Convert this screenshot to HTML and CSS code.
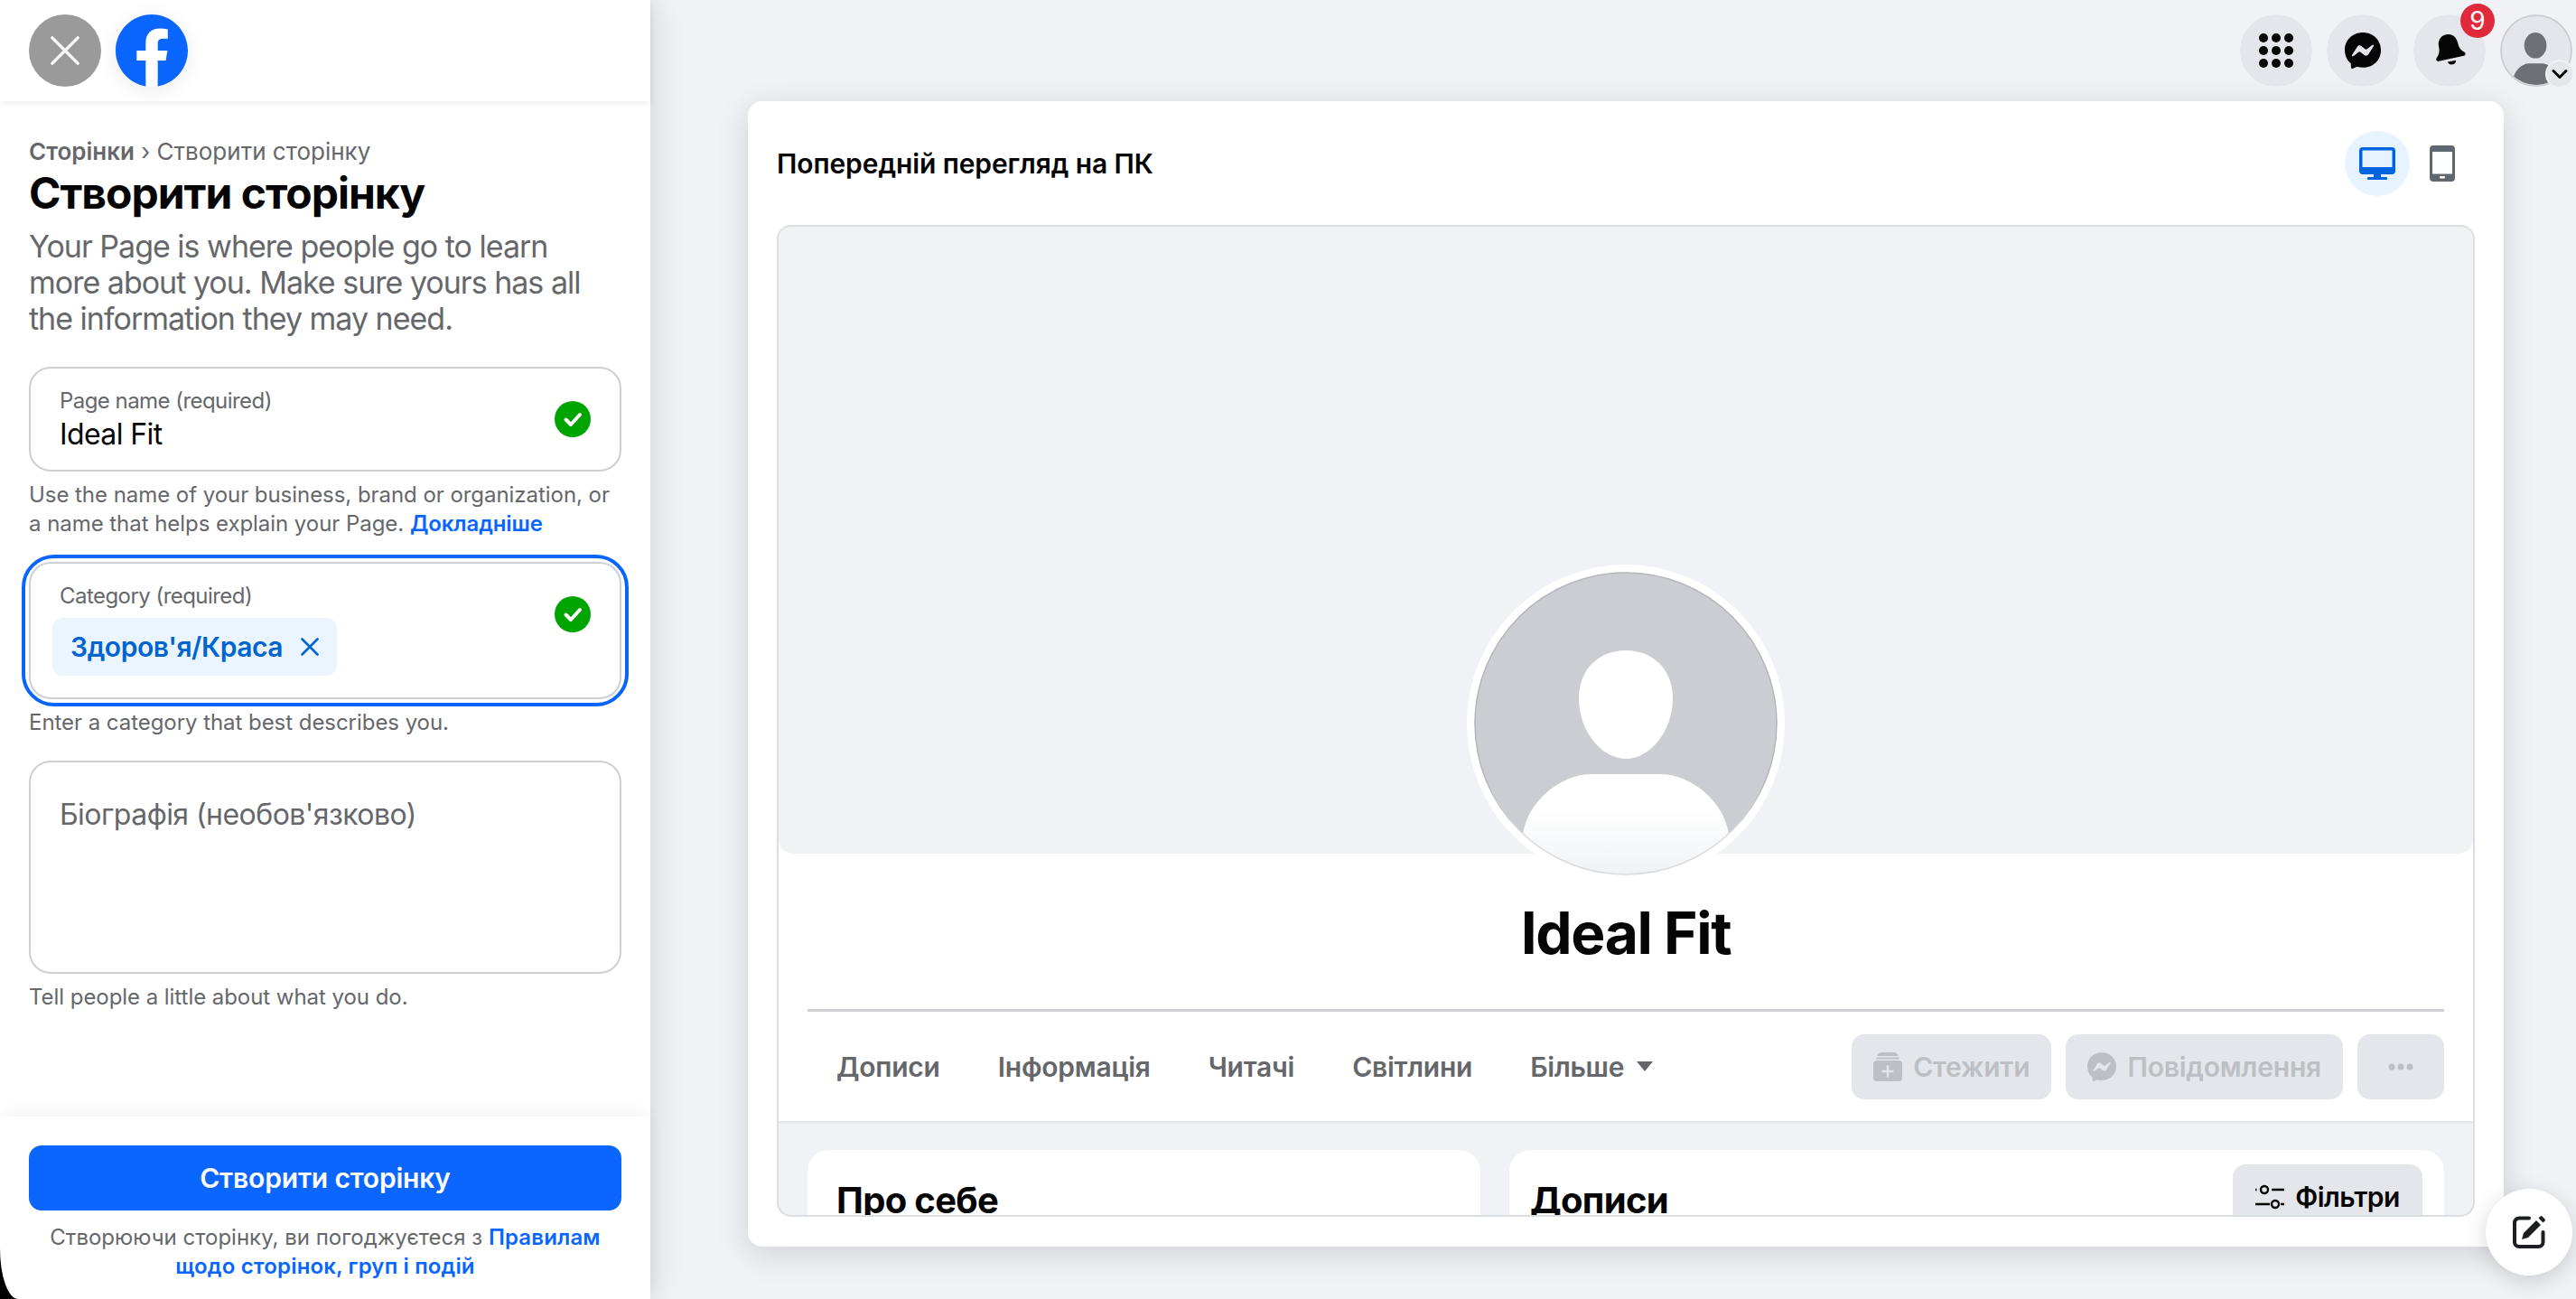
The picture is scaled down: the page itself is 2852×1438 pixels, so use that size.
FILE: index.html
```html
<!DOCTYPE html>
<html lang="uk">
<head>
  <meta charset="UTF-8">
  <title>Створити сторінку</title>
  <link rel="stylesheet" href="styles.css">
</head>
<body>
  <aside class="sidebar">
    <div class="side-head">
      <div class="close-btn">
        <svg viewBox="0 0 24 24" width="40" height="40"><path d="M3.5 3.5l17 17M20.5 3.5l-17 17" stroke="#fff" stroke-width="2" stroke-linecap="round" fill="none"/></svg>
      </div>
      <svg class="fb-logo" viewBox="0 0 36 36" width="80" height="80">
        <path fill="#0a66ff" d="M15 35.8C6.5 34.3 0 26.9 0 18 0 8.1 8.1 0 18 0s18 8.1 18 18c0 8.9-6.5 16.3-15 17.8l-1-.8h-4l-1 .8z"/>
        <path fill="#fff" d="M25 23l.8-5H21v-3.5c0-1.4.5-2.5 2.7-2.5H26V7.4c-1.3-.2-2.7-.4-4-.4-4.1 0-7 2.5-7 7v4h-4.5v5H15v12.7c1 .2 2 .3 3 .3s2-.1 3-.3V23h4z"/>
      </svg>
    </div>

    <div class="side-body">
      <div class="crumbs"><b>Сторінки</b> › Створити сторінку</div>
      <h1 class="side-title">Створити сторінку</h1>
      <p class="side-sub">Your Page is where people go to learn more about you. Make sure yours has all the information they may need.</p>

      <div class="field">
        <div class="field-label">Page name (required)</div>
        <div class="field-value">Ideal Fit</div>
        <svg class="ok" viewBox="0 0 40 40" width="40" height="40"><circle cx="20" cy="20" r="20" fill="#00a400"/><path d="M12.5 20.5l5.5 5.5 10-11" stroke="#fff" stroke-width="4" stroke-linecap="round" stroke-linejoin="round" fill="none"/></svg>
      </div>
      <p class="help">Use the name of your business, brand or organization, or a name that helps explain your Page. <a>Докладніше</a></p>

      <div class="focus-ring">
        <div class="field field-cat">
          <div class="field-label">Category (required)</div>
          <div class="chip">Здоров'я/Краса
            <svg viewBox="0 0 20 20" width="20" height="20"><path d="M1.5 1.5l17 17M18.5 1.5l-17 17" stroke="#0064d1" stroke-width="2.6" stroke-linecap="round" fill="none"/></svg>
          </div>
          <svg class="ok" viewBox="0 0 40 40" width="40" height="40"><circle cx="20" cy="20" r="20" fill="#00a400"/><path d="M12.5 20.5l5.5 5.5 10-11" stroke="#fff" stroke-width="4" stroke-linecap="round" stroke-linejoin="round" fill="none"/></svg>
        </div>
      </div>
      <p class="help help-cat">Enter a category that best describes you.</p>

      <div class="field field-bio">Біографія (необов'язково)</div>
      <p class="help help-bio">Tell people a little about what you do.</p>
    </div>

    <div class="side-foot">
      <div class="side-foot-inner">
        <div class="primary-btn">Створити сторінку</div>
        <p class="terms">Створюючи сторінку, ви погоджуєтеся з <a>Правилам щодо сторінок, груп і подій</a></p>
      </div>
    </div>
  </aside>

  <main class="main">
    <div class="topbar">
      <div class="round-btn">
        <svg viewBox="0 0 38 38" width="38" height="38" fill="#050505">
          <circle cx="5" cy="5" r="5"/><circle cx="19" cy="5" r="5"/><circle cx="33" cy="5" r="5"/>
          <circle cx="5" cy="19" r="5"/><circle cx="19" cy="19" r="5"/><circle cx="33" cy="19" r="5"/>
          <circle cx="5" cy="33" r="5"/><circle cx="19" cy="33" r="5"/><circle cx="33" cy="33" r="5"/>
        </svg>
      </div>
      <div class="round-btn">
        <svg viewBox="2 2 20 20" width="40" height="40">
          <path fill="#050505" d="M12 2C6.36 2 2 6.13 2 11.7c0 2.91 1.19 5.44 3.14 7.17.16.15.26.35.27.57l.05 1.78c.02.57.61.94 1.13.71l1.98-.87c.17-.08.36-.09.53-.04.91.25 1.88.38 2.9.38 5.64 0 10-4.13 10-9.7S17.64 2 12 2z"/>
          <path fill="#e4e6eb" d="M18 9.46l-2.94 4.66c-.47.74-1.47.93-2.17.4l-2.34-1.75a.6.6 0 0 0-.72 0l-3.16 2.4c-.42.32-.97-.18-.69-.63l2.94-4.66c.47-.74 1.47-.93 2.17-.4l2.34 1.75a.6.6 0 0 0 .72 0l3.16-2.4c.42-.32.97.18.69.63z"/>
        </svg>
      </div>
      <div class="round-btn">
        <svg viewBox="0 0 24 24" width="46" height="46">
          <g transform="rotate(-12 12 12)" fill="#050505">
            <path d="M12 2.5c-3.6 0-5.6 2.8-5.6 6 0 3-.9 4.5-2.5 6-.9.8-.5 2.2.7 2.2h14.8c1.2 0 1.6-1.4.7-2.2-1.6-1.5-2.5-3-2.5-6 0-3.2-2-6-5.600-6z"/>
            <path d="M9.500 18.200h5c-.3 1.300-1.300 2-2.500 2s-2.200-.7-2.500-2z"/>
          </g>
        </svg>
        <span class="badge">9</span>
      </div>
      <div class="round-btn avatar-btn">
        <svg viewBox="0 0 80 80" width="76" height="76">
          <ellipse cx="39" cy="34" rx="13" ry="15" fill="#6e7076"/>
          <path d="M12 80c0-14 9-25 20-25h14c11 0 20 11 20 25z" fill="#6e7076"/>
        </svg>
        <span class="chevron">
          <svg viewBox="0 0 20 20" width="20" height="20"><path d="M3 6.500l7 7 7-7" stroke="#050505" stroke-width="3" stroke-linecap="round" stroke-linejoin="round" fill="none"/></svg>
        </span>
      </div>
    </div>

    <section class="card">
      <div class="card-head">
        <div class="card-title">Попередній перегляд на ПК</div>
        <div class="view-toggle">
          <div class="view-btn view-on">
            <svg viewBox="0 0 40 36" width="40" height="36">
              <path fill="#0064e0" fill-rule="evenodd" d="M4 0h32a4 4 0 0 1 4 4v22a4 4 0 0 1-4 4H4a4 4 0 0 1-4-4V4a4 4 0 0 1 4-4zm-.500 3.500v18.500h33V3.500z"/>
              <rect x="16" y="29" width="8" height="4" fill="#0064e0"/>
              <rect x="9" y="33" width="22" height="3" rx="1.200" fill="#0064e0"/>
            </svg>
          </div>
          <div class="view-btn">
            <svg viewBox="0 0 28 40" width="28" height="40">
              <path fill="#606770" fill-rule="evenodd" d="M4 0h20a4 4 0 0 1 4 4v32a4 4 0 0 1-4 4H4a4 4 0 0 1-4-4V4a4 4 0 0 1 4-4zm-1 7v24.500h22V7z"/>
              <rect x="11" y="34" width="6" height="2.600" rx="1.300" fill="#fff"/>
            </svg>
          </div>
        </div>
      </div>

      <div class="preview">
        <div class="cover-wrap">
          <div class="cover">
            <div class="page-pic">
              <svg viewBox="0 0 336 336" width="336" height="336">
                <defs>
                  <linearGradient id="bodyfade" x1="0" y1="0" x2="0" y2="1">
                    <stop offset="0.35" stop-color="#fff"/>
                    <stop offset="1" stop-color="#f0f2f5"/>
                  </linearGradient>
                  <linearGradient id="rimfade" x1="0" y1="0" x2="0" y2="1">
                    <stop offset="0.7" stop-color="#b4b6bb"/>
                    <stop offset="0.85" stop-color="#d8dade"/>
                  </linearGradient>
                  <clipPath id="picclip"><circle cx="168" cy="168" r="167"/></clipPath>
                </defs>
                <circle cx="168" cy="168" r="167" fill="#cbcdd2"/>
                <path d="M168 87c-30 0-52 21-52 53 0 36 25 67 52 67s52-31 52-67c0-32-22-53-52-53z" fill="#fff"/>
                <path clip-path="url(#picclip)" d="M54 336V290c5-34 40-66 76-66h76c36 0 71 32 76 66v46z" fill="url(#bodyfade)"/>
                <circle cx="168" cy="168" r="167" fill="none" stroke="url(#rimfade)" stroke-width="1.500"/>
              </svg>
            </div>
          </div>
        </div>

        <div class="page-head">
          <div class="page-name">Ideal Fit</div>
          <div class="page-tabs">
            <div class="tab-list">
              <span class="tab">Дописи</span>
              <span class="tab">Інформація</span>
              <span class="tab">Читачі</span>
              <span class="tab">Світлини</span>
              <span class="tab">Більше <i class="caret"></i></span>
            </div>
            <div class="tab-actions">
              <div class="ghost-btn">
                <svg viewBox="0 0 32 32" width="32" height="32">
                  <path fill="#bcc0c4" d="M5 2.500C6 1 7.500 0 9.500 0h13c2 0 3.500 1 4.500 2.500l.6 1.500H4.400z"/>
                  <rect x="3.500" y="5.500" width="25" height="2" fill="#bcc0c4"/>
                  <path fill="#bcc0c4" fill-rule="evenodd" d="M4 9h24a4 4 0 0 1 4 4v15a4 4 0 0 1-4 4H4a4 4 0 0 1-4-4V13a4 4 0 0 1 4-4zm10.800 5.500v5.200H9.600v2.600h5.200v5.200h2.400v-5.200h5.200v-2.600h-5.200v-5.200z"/>
                </svg>
                Стежити
              </div>
              <div class="ghost-btn">
                <svg viewBox="2 2 20 20" width="32" height="32">
                  <path fill="#bcc0c4" d="M12 2C6.36 2 2 6.13 2 11.7c0 2.91 1.19 5.44 3.14 7.17.16.15.26.35.27.57l.05 1.78c.02.57.61.94 1.13.71l1.98-.87c.17-.08.36-.09.53-.04.91.25 1.88.38 2.9.38 5.64 0 10-4.13 10-9.7S17.64 2 12 2z"/>
                  <path fill="#e4e6eb" d="M18 9.46l-2.94 4.66c-.47.74-1.47.93-2.17.4l-2.34-1.75a.6.6 0 0 0-.72 0l-3.16 2.4c-.42.32-.97-.18-.69-.63l2.94-4.66c.47-.74 1.47-.93 2.17-.4l2.34 1.75a.6.6 0 0 0 .72 0l3.16-2.4c.42-.32.97.18.69.63z"/>
                </svg>
                Повідомлення
              </div>
              <div class="ghost-btn ghost-more">
                <svg viewBox="0 0 28 8" width="28" height="8" fill="#bcc0c4"><circle cx="4" cy="4" r="3.500"/><circle cx="14" cy="4" r="3.500"/><circle cx="24" cy="4" r="3.500"/></svg>
              </div>
            </div>
          </div>
        </div>

        <div class="page-body">
          <div class="panel panel-left"><h2>Про себе</h2></div>
          <div class="panel panel-right">
            <h2>Дописи</h2>
            <div class="filter-btn">
              <svg viewBox="0 0 32 32" width="32" height="32" fill="none" stroke="#050505" stroke-width="2.400">
                <circle cx="10" cy="8" r="4"/><path d="M0 8h1.500M18 8h14M0 24h16M28 24h4"/><circle cx="22" cy="24" r="4"/>
              </svg>
              Фільтри
            </div>
          </div>
        </div>
      </div>
    </section>

    <div class="compose">
      <svg viewBox="0 0 38 38" width="38" height="38">
        <path d="M19 3.500H8a5 5 0 0 0-5 5v21.500a5 5 0 0 0 5 5h21.500a5 5 0 0 0 5-5V19" fill="none" stroke="#1c1e21" stroke-width="4" stroke-linecap="round"/>
        <path d="M11 27l2-7L27 6l5 5-14 14z" fill="#1c1e21"/>
        <path d="M29.500 3.500l2-2a1.500 1.500 0 0 1 2 0l3 3a1.500 1.500 0 0 1 0 2l-2 2z" fill="#1c1e21"/>
      </svg>
    </div>
  </main>
</body>
</html>
```

FILE: styles.css
```css
* {
  box-sizing: border-box;
}
html, body {
  height: 100%;
}
body {
  margin: 0;
  display: flex;
  overflow: hidden;
  background: #f1f2f6;
  color: #050505;
  font-family: Inter, "Noto Sans", sans-serif;
}
h1, h2, p {
  margin: 0;
}
a {
  color: #0866ff;
  font-weight: 600;
}

/* left column */
.sidebar {
  width: 720px;
  flex: none;
  display: flex;
  flex-direction: column;
  background: #fff;
  box-shadow: 0 0 36px rgba(0, 0, 0, 0.14);
  position: relative;
  z-index: 2;
}
.side-head {
  height: 112px;
  flex: none;
  display: flex;
  gap: 16px;
  padding: 16px 32px;
  box-shadow: 0 2px 8px rgba(0, 0, 0, 0.08);
}
.close-btn {
  width: 80px;
  height: 80px;
  border-radius: 50%;
  background: #9a9a9a;
  display: flex;
  align-items: center;
  justify-content: center;
}
.fb-logo {
  filter: drop-shadow(0 4px 10px rgba(0, 0, 0, 0.08));
}
.side-body {
  flex: 1;
  padding: 40px 32px 0;
}
.crumbs {
  font-size: 26px;
  line-height: 32px;
  color: #65676b;
}
.crumbs b {
  font-weight: 600;
}
.side-title {
  font-size: 48px;
  line-height: 48px;
  font-weight: 700;
  letter-spacing: -1px;
  margin-top: 6px;
}
.side-sub {
  font-size: 34px;
  line-height: 40px;
  color: #65676b;
  letter-spacing: -1px;
  margin-top: 15px;
}
.field {
  position: relative;
  height: 116px;
  margin-top: 33px;
  padding: 20px 32px 0;
  border: 2px solid #ccd0d5;
  border-radius: 24px;
}
.field-label {
  font-size: 24px;
  line-height: 32px;
  color: #65676b;
  letter-spacing: -0.55px;
}
.field-value {
  font-size: 32px;
  line-height: 40px;
  margin-top: 1px;
  letter-spacing: -0.6px;
}
.ok {
  position: absolute;
  right: 32px;
  top: 36px;
}
.help {
  font-size: 24px;
  line-height: 32px;
  color: #65676b;
  margin-top: 10px;
  letter-spacing: -0.05px;
}
.help a {
  letter-spacing: -0.1px;
}
.focus-ring {
  margin: 18px -8px 0;
  padding: 4px;
  border: 4px solid #0866ff;
  border-radius: 36px;
  height: 168px;
}
.field-cat {
  height: 152px;
  margin-top: 0;
  padding-top: 20px;
}
.chip {
  display: inline-flex;
  align-items: center;
  gap: 20px;
  height: 64px;
  margin: 8px 0 0 -8px;
  padding: 0 20px;
  border-radius: 12px;
  background: #ebf5ff;
  color: #0064d1;
  font-size: 30px;
  font-weight: 600;
  letter-spacing: -0.45px;
}
.help-cat {
  margin-top: 2px;
}
.field-bio {
  height: 236px;
  margin-top: 26px;
  padding-top: 38px;
  font-size: 32px;
  line-height: 40px;
  color: #65676b;
  letter-spacing: -0.55px;
}
.help-bio {
  margin-top: 10px;
}
.side-foot {
  flex: none;
  height: 202px;
  background: #000;
  box-shadow: 0 -4px 16px rgba(0, 0, 0, 0.05);
}
.side-foot-inner {
  height: 100%;
  padding: 32px 32px 0;
  background: #fff;
  border-bottom-left-radius: 20px 56px;
}
.primary-btn {
  height: 72px;
  border-radius: 14px;
  background: #0a66ff;
  color: #fff;
  font-size: 30px;
  font-weight: 600;
  letter-spacing: -0.17px;
  display: flex;
  align-items: center;
  justify-content: center;
}
.terms {
  font-size: 24px;
  line-height: 32px;
  color: #65676b;
  text-align: center;
  margin-top: 14px;
}
.terms a {
  letter-spacing: 0.15px;
}

/* right column */
.main {
  flex: 1;
  min-width: 0;
  position: relative;
}
.topbar {
  height: 112px;
  display: flex;
  justify-content: flex-end;
  gap: 16px;
  padding: 16px 4px 0 0;
}
.round-btn {
  position: relative;
  width: 80px;
  height: 80px;
  border-radius: 50%;
  background: #e4e6eb;
  display: flex;
  align-items: center;
  justify-content: center;
}
.badge {
  position: absolute;
  top: -12px;
  right: -10px;
  width: 38px;
  height: 38px;
  border-radius: 50%;
  background: #e02a3c;
  color: #fff;
  font-size: 28px;
  line-height: 38px;
  text-align: center;
}
.avatar-btn {
  border: 2px solid #ccd0d5;
  overflow: visible;
}
.avatar-btn > svg {
  border-radius: 50%;
}
.chevron {
  position: absolute;
  right: -2px;
  bottom: -2px;
  width: 28px;
  height: 28px;
  border-radius: 50%;
  background: #e4e6eb;
  box-shadow: 0 0 0 2px #f1f2f6;
  display: flex;
  align-items: center;
  justify-content: center;
}
.card {
  width: 1944px;
  height: 1268px;
  margin-left: 108px;
  padding: 0 32px;
  background: #fff;
  border-radius: 16px;
  box-shadow: 0 8px 36px rgba(0, 0, 0, 0.14);
}
.card-head {
  height: 137px;
  display: flex;
  align-items: center;
  justify-content: space-between;
}
.card-title {
  font-size: 30px;
  font-weight: 600;
  letter-spacing: -0.1px;
}
.view-toggle {
  display: flex;
  align-items: center;
}
.view-btn {
  width: 72px;
  height: 72px;
  border-radius: 50%;
  display: flex;
  align-items: center;
  justify-content: center;
}
.view-on {
  background: #e7f3ff;
}
.preview {
  height: 1098px;
  border: 2px solid #dadde1;
  border-radius: 16px;
  overflow: hidden;
  background: #f0f2f5;
  display: flex;
  flex-direction: column;
}
.cover-wrap {
  height: 694px;
  flex: none;
  background: #fff;
  position: relative;
  z-index: 1;
}
.cover {
  height: 100%;
  display: flex;
  align-items: flex-end;
  justify-content: center;
  border-radius: 0 0 16px 16px;
  background: #f0f2f5;
}
.page-pic {
  width: 352px;
  height: 352px;
  margin-bottom: -32px;
  padding: 8px;
  border-radius: 50%;
  background: #fff;
}
.page-pic svg {
  display: block;
}
.page-head {
  height: 296px;
  flex: none;
  padding: 0 32px;
  background: #fff;
  box-shadow: 0 1px 3px rgba(0, 0, 0, 0.1);
  position: relative;
}
.page-name {
  font-size: 64px;
  line-height: 80px;
  font-weight: 700;
  text-align: center;
  letter-spacing: -1.4px;
  padding-top: 48px;
  height: 175px;
  border-bottom: 3px solid #ced0d4;
}
.page-tabs {
  height: 121px;
  display: flex;
  align-items: center;
  justify-content: space-between;
}
.tab-list {
  display: flex;
}
.tab {
  padding: 0 32px;
  font-size: 30px;
  font-weight: 600;
  color: #65676b;
  letter-spacing: -0.25px;
  display: flex;
  align-items: center;
  gap: 14px;
}
.caret {
  width: 0;
  height: 0;
  border-left: 9px solid transparent;
  border-right: 9px solid transparent;
  border-top: 11px solid #65676b;
}
.tab-actions {
  display: flex;
  gap: 16px;
}
.ghost-btn {
  height: 72px;
  padding: 0 24px;
  border-radius: 14px;
  background: #e4e6eb;
  color: #bcc0c4;
  font-size: 30px;
  font-weight: 600;
  letter-spacing: -0.2px;
  display: flex;
  align-items: center;
  gap: 12px;
}
.ghost-more {
  width: 96px;
  justify-content: center;
  padding: 0;
}
.page-body {
  flex: 1;
  padding: 32px 32px 0;
  display: flex;
  gap: 32px;
}
.panel {
  height: 200px;
  background: #fff;
  border-radius: 24px;
  padding: 32px 32px;
}
.panel h2 {
  font-size: 40px;
  line-height: 48px;
  font-weight: 700;
  letter-spacing: -0.7px;
}
.panel-left {
  width: 745px;
}
.panel-right {
  flex: 1;
  padding-left: 23px;
  padding-right: 24px;
  display: flex;
  justify-content: space-between;
  align-items: flex-start;
}
.filter-btn {
  width: 210px;
  height: 72px;
  margin-top: -16px;
  border-radius: 14px;
  background: #e4e6eb;
  font-size: 30px;
  font-weight: 600;
  letter-spacing: -0.6px;
  display: flex;
  align-items: center;
  justify-content: center;
  gap: 12px;
}
.compose {
  position: absolute;
  right: 4px;
  bottom: 26px;
  width: 96px;
  height: 96px;
  border-radius: 50%;
  background: #fff;
  box-shadow: 0 6px 24px rgba(0, 0, 0, 0.16);
  display: flex;
  align-items: center;
  justify-content: center;
}
```
